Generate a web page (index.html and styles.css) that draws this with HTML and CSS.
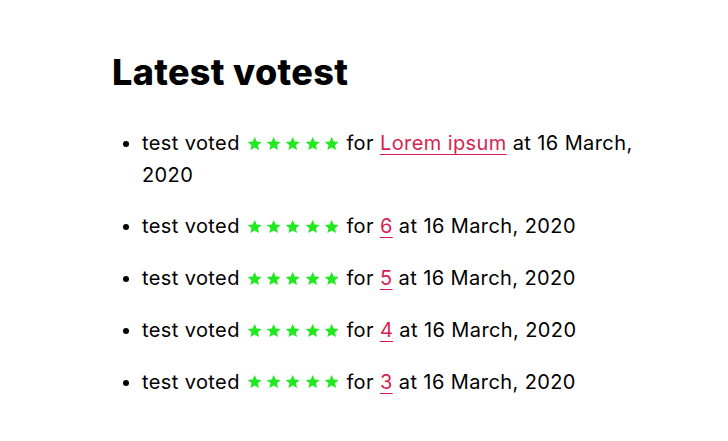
FILE: index.html
```html
<!DOCTYPE html>
<html lang="en">
<head>
<meta charset="utf-8">
<title>Latest votest</title>
<link rel="stylesheet" href="styles.css">
</head>
<body>
<main class="page">
  <h1 class="title">Latest votest</h1>
  <ul class="votes">
    <li class="vote">test voted <span class="stars"><svg class="star" viewBox="0 0 24 24"><path d="M12 1.5l3.1 7.2 7.8.6-5.9 5.1 1.8 7.6L12 18l-6.8 4 1.8-7.6L1.1 9.3l7.8-.6z"/></svg><svg class="star" viewBox="0 0 24 24"><path d="M12 1.5l3.1 7.2 7.8.6-5.9 5.1 1.8 7.6L12 18l-6.8 4 1.8-7.6L1.1 9.3l7.8-.6z"/></svg><svg class="star" viewBox="0 0 24 24"><path d="M12 1.5l3.1 7.2 7.8.6-5.9 5.1 1.8 7.6L12 18l-6.8 4 1.8-7.6L1.1 9.3l7.8-.6z"/></svg><svg class="star" viewBox="0 0 24 24"><path d="M12 1.5l3.1 7.2 7.8.6-5.9 5.1 1.8 7.6L12 18l-6.8 4 1.8-7.6L1.1 9.3l7.8-.6z"/></svg><svg class="star" viewBox="0 0 24 24"><path d="M12 1.5l3.1 7.2 7.8.6-5.9 5.1 1.8 7.6L12 18l-6.8 4 1.8-7.6L1.1 9.3l7.8-.6z"/></svg></span> for <a href="#">Lorem ipsum</a> at 16 March, 2020</li>
    <li class="vote">test voted <span class="stars"><svg class="star" viewBox="0 0 24 24"><path d="M12 1.5l3.1 7.2 7.8.6-5.9 5.1 1.8 7.6L12 18l-6.8 4 1.8-7.6L1.1 9.3l7.8-.6z"/></svg><svg class="star" viewBox="0 0 24 24"><path d="M12 1.5l3.1 7.2 7.8.6-5.9 5.1 1.8 7.6L12 18l-6.8 4 1.8-7.6L1.1 9.3l7.8-.6z"/></svg><svg class="star" viewBox="0 0 24 24"><path d="M12 1.5l3.1 7.2 7.8.6-5.9 5.1 1.8 7.6L12 18l-6.8 4 1.8-7.6L1.1 9.3l7.8-.6z"/></svg><svg class="star" viewBox="0 0 24 24"><path d="M12 1.5l3.1 7.2 7.8.6-5.9 5.1 1.8 7.6L12 18l-6.8 4 1.8-7.6L1.1 9.3l7.8-.6z"/></svg><svg class="star" viewBox="0 0 24 24"><path d="M12 1.5l3.1 7.2 7.8.6-5.9 5.1 1.8 7.6L12 18l-6.8 4 1.8-7.6L1.1 9.3l7.8-.6z"/></svg></span> for <a href="#">6</a> at 16 March, 2020</li>
    <li class="vote">test voted <span class="stars"><svg class="star" viewBox="0 0 24 24"><path d="M12 1.5l3.1 7.2 7.8.6-5.9 5.1 1.8 7.6L12 18l-6.8 4 1.8-7.6L1.1 9.3l7.8-.6z"/></svg><svg class="star" viewBox="0 0 24 24"><path d="M12 1.5l3.1 7.2 7.8.6-5.9 5.1 1.8 7.6L12 18l-6.8 4 1.8-7.6L1.1 9.3l7.8-.6z"/></svg><svg class="star" viewBox="0 0 24 24"><path d="M12 1.5l3.1 7.2 7.8.6-5.9 5.1 1.8 7.6L12 18l-6.8 4 1.8-7.6L1.1 9.3l7.8-.6z"/></svg><svg class="star" viewBox="0 0 24 24"><path d="M12 1.5l3.1 7.2 7.8.6-5.9 5.1 1.8 7.6L12 18l-6.8 4 1.8-7.6L1.1 9.3l7.8-.6z"/></svg><svg class="star" viewBox="0 0 24 24"><path d="M12 1.5l3.1 7.2 7.8.6-5.9 5.1 1.8 7.6L12 18l-6.8 4 1.8-7.6L1.1 9.3l7.8-.6z"/></svg></span> for <a href="#">5</a> at 16 March, 2020</li>
    <li class="vote">test voted <span class="stars"><svg class="star" viewBox="0 0 24 24"><path d="M12 1.5l3.1 7.2 7.8.6-5.9 5.1 1.8 7.6L12 18l-6.8 4 1.8-7.6L1.1 9.3l7.8-.6z"/></svg><svg class="star" viewBox="0 0 24 24"><path d="M12 1.5l3.1 7.2 7.8.6-5.9 5.1 1.8 7.6L12 18l-6.8 4 1.8-7.6L1.1 9.3l7.8-.6z"/></svg><svg class="star" viewBox="0 0 24 24"><path d="M12 1.5l3.1 7.2 7.8.6-5.9 5.1 1.8 7.6L12 18l-6.8 4 1.8-7.6L1.1 9.3l7.8-.6z"/></svg><svg class="star" viewBox="0 0 24 24"><path d="M12 1.5l3.1 7.2 7.8.6-5.9 5.1 1.8 7.6L12 18l-6.8 4 1.8-7.6L1.1 9.3l7.8-.6z"/></svg><svg class="star" viewBox="0 0 24 24"><path d="M12 1.5l3.1 7.2 7.8.6-5.9 5.1 1.8 7.6L12 18l-6.8 4 1.8-7.6L1.1 9.3l7.8-.6z"/></svg></span> for <a href="#">4</a> at 16 March, 2020</li>
    <li class="vote">test voted <span class="stars"><svg class="star" viewBox="0 0 24 24"><path d="M12 1.5l3.1 7.2 7.8.6-5.9 5.1 1.8 7.6L12 18l-6.8 4 1.8-7.6L1.1 9.3l7.8-.6z"/></svg><svg class="star" viewBox="0 0 24 24"><path d="M12 1.5l3.1 7.2 7.8.6-5.9 5.1 1.8 7.6L12 18l-6.8 4 1.8-7.6L1.1 9.3l7.8-.6z"/></svg><svg class="star" viewBox="0 0 24 24"><path d="M12 1.5l3.1 7.2 7.8.6-5.9 5.1 1.8 7.6L12 18l-6.8 4 1.8-7.6L1.1 9.3l7.8-.6z"/></svg><svg class="star" viewBox="0 0 24 24"><path d="M12 1.5l3.1 7.2 7.8.6-5.9 5.1 1.8 7.6L12 18l-6.8 4 1.8-7.6L1.1 9.3l7.8-.6z"/></svg><svg class="star" viewBox="0 0 24 24"><path d="M12 1.5l3.1 7.2 7.8.6-5.9 5.1 1.8 7.6L12 18l-6.8 4 1.8-7.6L1.1 9.3l7.8-.6z"/></svg></span> for <a href="#">3</a> at 16 March, 2020</li>
  </ul>
</main>
</body>
</html>
```
FILE: styles.css
```css
html, body {
  margin: 0;
  padding: 0;
  background: #fff;
}
body {
  font-family: Inter, "Noto Sans", sans-serif;
  color: #000;
}
.page {
  width: 540px;
  margin-left: 112px;
  padding-top: 51px;
}
.title {
  margin: 0 0 34px;
  font-size: 36px;
  font-weight: 800;
  letter-spacing: 0.33px;
  line-height: 1.2;
}
.votes {
  margin: 0;
  padding-left: 30px;
  font-size: 20px;
  letter-spacing: 0.4px;
  line-height: 31.5px;
}
.vote {
  margin-bottom: 20.25px;
}
.stars {
  display: inline-flex;
  gap: 3.9px;
  vertical-align: -1px;
  margin: 0 1px;
}
.star {
  width: 15.4px;
  height: 15.4px;
  fill: #22e822;
}
a {
  color: #d71f51;
  text-decoration: underline;
  text-underline-offset: 4px;
  text-decoration-thickness: 1px;
}
```
